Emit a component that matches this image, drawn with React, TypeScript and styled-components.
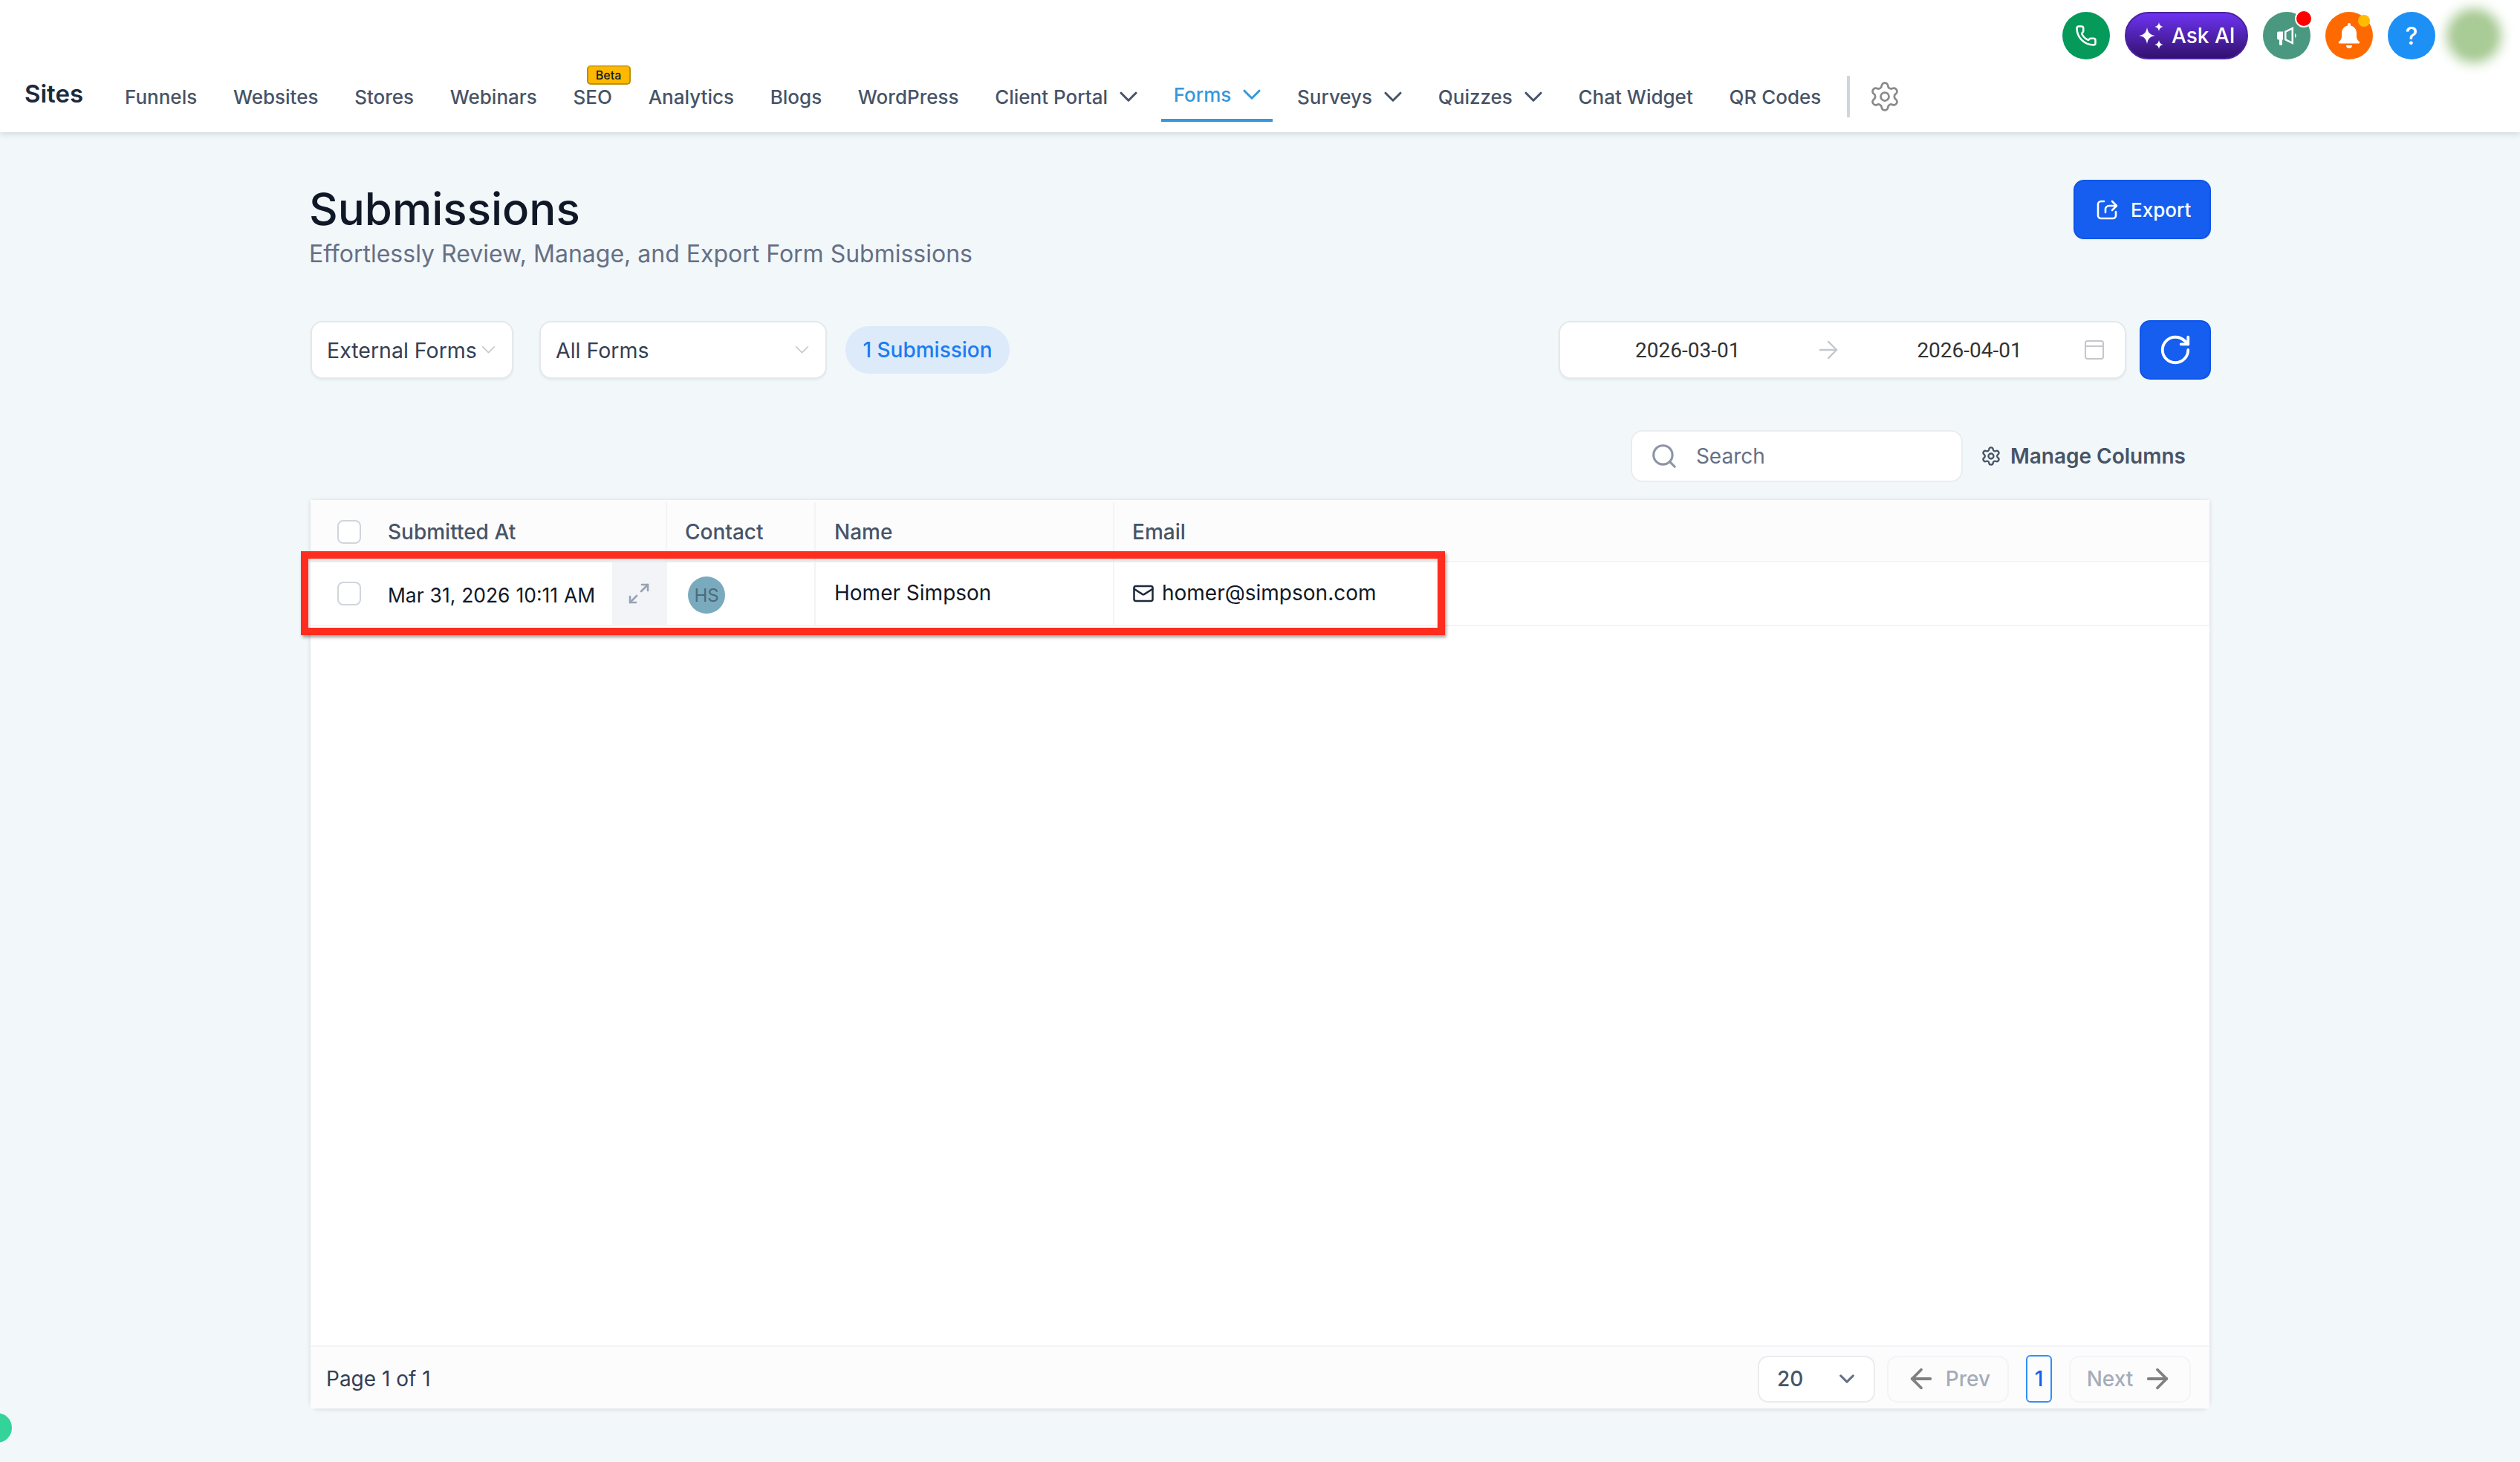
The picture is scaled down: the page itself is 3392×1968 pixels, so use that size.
import React from 'react';
import styled, { createGlobalStyle } from 'styled-components';
import { Phone, Settings, Search, Mail, ArrowLeft, ArrowRight, RotateCw } from 'lucide-react';

const GlobalStyle = createGlobalStyle`
  html, body {
    margin: 0;
    padding: 0;
    background: #f2f7fa;
    font-family: Inter, "Noto Sans", sans-serif;
  }
  * { box-sizing: border-box; }
`;

const NAV_ITEMS = [
  { label: 'Funnels' },
  { label: 'Websites' },
  { label: 'Stores' },
  { label: 'Webinars' },
  { label: 'SEO', beta: true },
  { label: 'Analytics' },
  { label: 'Blogs' },
  { label: 'WordPress' },
  { label: 'Client Portal', caret: true },
  { label: 'Forms', caret: true, active: true },
  { label: 'Surveys', caret: true },
  { label: 'Quizzes', caret: true },
  { label: 'Chat Widget' },
  { label: 'QR Codes' },
];

const Chevron = ({ w = 24, color = 'currentColor', sw = 3 }: { w?: number; color?: string; sw?: number }) => (
  <svg width={w} height={w * 0.6} viewBox="0 0 24 14" fill="none">
    <path d="M2 2l10 10L22 2" stroke={color} strokeWidth={sw * (24 / w)} strokeLinecap="round" strokeLinejoin="round" />
  </svg>
);

const Stars = () => (
  <svg width="34" height="36" viewBox="0 0 34 36" fill="#fff">
    <path d="M12 7c1.500 7 3.500 9.500 11 11-7.500 1.500-9.500 4-11 11-1.500-7-3.500-9.500-11-11 7.500-1.500 9.500-4 11-11z" />
    <path d="M28 0c.7 3.500 2 5 5.500 6-3.500 1-4.800 2.500-5.500 6-.7-3.500-2-5-5.500-6 3.500-1 4.800-2.500 5.500-6z" />
    <path d="M28 24c.7 3.500 2 5 5.500 6-3.500 1-4.800 2.500-5.500 6-.7-3.500-2-5-5.500-6 3.500-1 4.800-2.500 5.500-6z" />
  </svg>
);

const MegaphoneIcon = () => (
  <svg width="27" height="27" viewBox="0 0 27 27" fill="#fff">
    <path d="M0 9.500a2 2 0 0 1 2-2h6v11H7v6a1.500 1.500 0 0 1-1.500 1.500h-1A1.500 1.500 0 0 1 3 24.500v-6H2a2 2 0 0 1-2-2z" />
    <path fillRule="evenodd" d="M10 7L22 1v24L10 19zM12.500 8.500L19.500 5v16l-7-3.500z" />
    <path d="M24 10a3.500 3.500 0 0 1 0 6z" />
  </svg>
);

const BellIcon = () => (
  <svg width="30" height="34" viewBox="0 0 30 34" fill="#fff">
    <path d="M15 0c1.200 0 2 .8 2 2v1.500c5 1 8 5 8 10v5c0 3 2 5 4 7 .7.7.3 2-1 2H2c-1.300 0-1.700-1.300-1-2 2-2 4-4 4-7v-5c0-5 3-9 8-10V2c0-1.200.8-2 2-2z" />
    <path d="M11 30h8a4 4 0 0 1-8 0z" />
  </svg>
);

const ExportIcon = () => (
  <svg width="30" height="30" viewBox="0 0 30 30" fill="none" stroke="#fff" strokeWidth="2.6" strokeLinecap="round" strokeLinejoin="round">
    <path d="M11 4H7a4 4 0 0 0-4 4v15a4 4 0 0 0 4 4h16a4 4 0 0 0 4-4v-5" />
    <path d="M13 19v-4a5 5 0 0 1 5-5h9" />
    <path d="M22 4l6 6-6 6" />
  </svg>
);

const CalendarIcon = () => (
  <svg width="26" height="26" viewBox="0 0 26 26" fill="none" stroke="#c4c7cc" strokeWidth="2">
    <rect x="1" y="1" width="24" height="24" rx="3" />
    <path d="M1 8h24" />
  </svg>
);

const ExpandIcon = () => (
  <svg width="28" height="28" viewBox="0 0 28 28" fill="none" stroke="#98a2b3" strokeWidth="2.600" strokeLinecap="round" strokeLinejoin="round">
    <path d="M17 11l9-9" />
    <path d="M18 2h8v8" />
    <path d="M11 17l-9 9" />
    <path d="M2 18v8h8" />
  </svg>
);

export default function App() {
  return (
    <Page>
      <GlobalStyle />
      <Header>
        <TopBar>
          <RoundButton $bg="#059a5a">
            <Phone size={30} color="#fff" strokeWidth={2} />
          </RoundButton>
          <AskAi>
            <Stars />
            Ask AI
          </AskAi>
          <RoundButton $bg="#4a9880">
            <MegaphoneIcon />
            <Dot $bg="#ff0000" $ring />
          </RoundButton>
          <RoundButton $bg="#ff6a00">
            <BellIcon />
            <Dot $bg="#ffbc00" />
          </RoundButton>
          <RoundButton $bg="#1c90f5">
            <HelpMark>?</HelpMark>
          </RoundButton>
          <BlurAvatar />
        </TopBar>
        <NavBar>
          <Brand>Sites</Brand>
          <NavList>
            {NAV_ITEMS.map(item => (
              <NavItem key={item.label} $active={item.active}>
                {item.label}
                {item.caret && <Chevron />}
                {item.beta && <BetaBadge>Beta</BetaBadge>}
              </NavItem>
            ))}
          </NavList>
          <NavDivider />
          <Settings size={44} color="#8a8a8a" strokeWidth={1.5} />
        </NavBar>
      </Header>

      <Main>
        <TitleRow>
          <div>
            <Title>Submissions</Title>
            <Subtitle>Effortlessly Review, Manage, and Export Form Submissions</Subtitle>
          </div>
          <PrimaryButton>
            <ExportIcon />
            Export
          </PrimaryButton>
        </TitleRow>

        <FilterRow>
          <SelectBox $width={273}>
            External Forms
            <Chevron w={19} color="#c4c7cc" sw={1.6} />
          </SelectBox>
          <SelectBox $width={387} $gapLeft={35}>
            All Forms
            <Chevron w={19} color="#c4c7cc" sw={1.6} />
          </SelectBox>
          <CountPill>1 Submission</CountPill>
          <DateRange>
            <DateText>2026-03-01</DateText>
            <RangeArrow>
              <ArrowRight size={38} color="#c4c7cc" strokeWidth={1.5} />
            </RangeArrow>
            <DateText>2026-04-01</DateText>
            <CalendarSlot>
              <CalendarIcon />
            </CalendarSlot>
          </DateRange>
          <RefreshButton>
            <RotateCw size={46} color="#fff" strokeWidth={2} />
          </RefreshButton>
        </FilterRow>

        <ToolRow>
          <SearchBox>
            <Search size={38} color="#8d95a5" strokeWidth={2} />
            Search
          </SearchBox>
          <ManageColumns>
            <Settings size={28} color="#475467" strokeWidth={2} />
            Manage Columns
          </ManageColumns>
        </ToolRow>

        <TableCard>
          <HeaderRow>
            <FirstCell>
              <Checkbox />
              Submitted At
            </FirstCell>
            <ContactCell>Contact</ContactCell>
            <NameCell>Name</NameCell>
            <EmailCell>Email</EmailCell>
          </HeaderRow>
          <BodyRow>
            <FirstCell>
              <Checkbox />
              <DateValue>Mar 31, 2026 10:11 AM</DateValue>
              <ExpandBox>
                <ExpandIcon />
              </ExpandBox>
            </FirstCell>
            <ContactCell>
              <Avatar>HS</Avatar>
            </ContactCell>
            <NameCell>
              <RaisedText>Homer Simpson</RaisedText>
            </NameCell>
            <EmailCell>
              <Mail size={30} color="#1d2939" strokeWidth={2} />
              <RaisedText>homer@simpson.com</RaisedText>
            </EmailCell>
          </BodyRow>
          <TableSpace />
          <TableFooter>
            <PageInfo>Page 1 of 1</PageInfo>
            <Pager>
              <PageSize>
                20
                <Chevron w={20} color="#667085" sw={3} />
              </PageSize>
              <PagerButton>
                <ArrowLeft size={42} color="#808080" strokeWidth={2.2} />
                Prev
              </PagerButton>
              <PageNumber>1</PageNumber>
              <PagerButton>
                Next
                <ArrowRight size={42} color="#808080" strokeWidth={2.2} />
              </PagerButton>
            </Pager>
          </TableFooter>
          <Highlight />
        </TableCard>
      </Main>
      <ChatDot />
    </Page>
  );
}

const Page = styled.div`
  position: relative;
  width: 3392px;
  height: 1968px;
  overflow: hidden;
  background: #f2f7fa;
`;

const Header = styled.header`
  height: 178px;
  background: #fff;
  box-shadow: 0 2px 8px rgba(16, 24, 40, 0.16);
`;

const TopBar = styled.div`
  display: flex;
  align-items: center;
  justify-content: flex-end;
  gap: 20px;
  height: 96px;
  padding-right: 33px;
`;

const RoundButton = styled.div<{ $bg: string }>`
  position: relative;
  display: flex;
  align-items: center;
  justify-content: center;
  width: 64px;
  height: 64px;
  border-radius: 50%;
  background: ${p => p.$bg};
`;

const Dot = styled.span<{ $bg: string; $ring?: boolean }>`
  position: absolute;
  top: ${p => (p.$ring ? '-3px' : '4px')};
  right: ${p => (p.$ring ? '-3px' : '4px')};
  box-sizing: content-box;
  width: ${p => (p.$ring ? '20px' : '16px')};
  height: ${p => (p.$ring ? '20px' : '16px')};
  border-radius: 50%;
  background: ${p => p.$bg};
  border: ${p => (p.$ring ? '2px solid #fff' : 'none')};
`;

const HelpMark = styled.span`
  color: #fff;
  font-size: 32px;
  font-weight: 500;
`;

const AskAi = styled.div`
  display: flex;
  align-items: center;
  gap: 11px;
  width: 166px;
  height: 64px;
  padding-left: 16px;
  border-radius: 32px;
  border: 2px solid #4a22a0;
  background: linear-gradient(180deg, #6d33f0 0%, #32116e 100%);
  color: #fff;
  font-size: 28px;
  font-weight: 500;
`;

const BlurAvatar = styled.div`
  width: 58px;
  height: 58px;
  margin-left: 3px;
  border-radius: 50%;
  background: #a9cb96;
  box-shadow: 0 0 14px 8px #a9cb96;
  filter: blur(5px);
`;

const NavBar = styled.nav`
  display: flex;
  align-items: center;
  height: 68px;
  padding-left: 33px;
`;

const Brand = styled.div`
  width: 135px;
  margin-bottom: 8px;
  color: #1d2939;
  font-size: 33px;
  font-weight: 600;
`;

const NavList = styled.div`
  display: flex;
  align-items: center;
  gap: 48.7px;
`;

const NavItem = styled.div<{ $active?: boolean }>`
  position: relative;
  display: flex;
  align-items: center;
  gap: 16px;
  height: 34px;
  margin-bottom: ${p => (p.$active ? '6px' : '0')};
  color: ${p => (p.$active ? '#3498db' : '#475467')};
  font-size: 26px;
  font-weight: 500;
  white-space: nowrap;

  ${p =>
    p.$active &&
    `
    &::after {
      content: '';
      position: absolute;
      left: -17px;
      right: -16px;
      top: 50px;
      height: 4px;
      background: #3498db;
    }
  `}
`;

const BetaBadge = styled.span`
  position: absolute;
  left: 18px;
  bottom: calc(100% - 1px);
  width: 59px;
  height: 26px;
  border-radius: 5px;
  border: 2px solid #b8900c;
  border-top-color: #dda50a;
  background: #ffb800;
  color: #101828;
  font-size: 16px;
  font-weight: 500;
  line-height: 22px;
  text-align: center;
`;

const NavDivider = styled.div`
  width: 4px;
  height: 56px;
  margin: 0 25px 0 35px;
  background: #d0d5dd;
`;

const Main = styled.main`
  width: 2558px;
  margin-left: 418px;
`;

const TitleRow = styled.div`
  display: flex;
  align-items: flex-start;
  justify-content: space-between;
  height: 253px;
  padding-top: 64px;
`;

const Title = styled.h1`
  margin: 3px 0 0 -2px;
  color: #101828;
  font-size: 60px;
  font-weight: 500;
  line-height: 72px;
`;

const Subtitle = styled.p`
  margin: 5px 0 0 -2px;
  color: #667085;
  font-size: 32px;
  font-weight: 400;
  line-height: 40px;
`;

const PrimaryButton = styled.div`
  display: flex;
  align-items: center;
  gap: 17px;
  width: 185px;
  height: 80px;
  padding-left: 28px;
  border-radius: 14px;
  border: 2px solid #0e55e8;
  background: #155eef;
  color: #fff;
  font-size: 26px;
  font-weight: 500;
`;

const FilterRow = styled.div`
  display: flex;
  align-items: center;
  height: 80px;
`;

const SelectBox = styled.div<{ $width: number; $gapLeft?: number }>`
  display: flex;
  align-items: center;
  justify-content: space-between;
  width: ${p => p.$width}px;
  height: 78px;
  margin-left: ${p => p.$gapLeft || 0}px;
  padding: 0 22px 0 20px;
  border-radius: 16px;
  border: 2px solid #e4e7ec;
  background: #fff;
  box-shadow: 0 2px 3px rgba(16, 24, 40, 0.05);
  color: #344054;
  font-size: 28.5px;
  white-space: nowrap;
`;

const CountPill = styled.div`
  display: flex;
  align-items: center;
  justify-content: center;
  width: 221px;
  height: 64px;
  margin-left: 25px;
  border-radius: 32px;
  background: #dceafa;
  color: #1c7cf0;
  font-size: 28px;
  font-weight: 500;
`;

const DateRange = styled.div`
  display: flex;
  align-items: center;
  width: 764px;
  height: 78px;
  margin-left: auto;
  padding-left: 101px;
  border-radius: 16px;
  border: 2px solid #e4e7ec;
  background: #fff;
  box-shadow: 0 2px 3px rgba(16, 24, 40, 0.05);
`;

const DateText = styled.span`
  color: #333333;
  font-family: Roboto, sans-serif;
  font-size: 28px;
`;

const RangeArrow = styled.span`
  display: flex;
  margin: 0 100px;
`;

const CalendarSlot = styled.span`
  display: flex;
  margin-left: 84px;
`;

const RefreshButton = styled.div`
  display: flex;
  align-items: center;
  justify-content: center;
  width: 96px;
  height: 80px;
  margin-left: 18px;
  border-radius: 14px;
  border: 2px solid #0e55e8;
  background: #155eef;
`;

const ToolRow = styled.div`
  display: flex;
  align-items: center;
  justify-content: flex-end;
  gap: 24px;
  height: 70px;
  margin-top: 68px;
  padding-right: 34px;
`;

const SearchBox = styled.div`
  display: flex;
  align-items: center;
  gap: 24px;
  width: 447px;
  height: 70px;
  padding-left: 24px;
  border-radius: 16px;
  border: 2px solid #eaecf0;
  background: #fff;
  color: #667085;
  font-size: 28px;
`;

const ManageColumns = styled.div`
  display: flex;
  align-items: center;
  gap: 12px;
  color: #475467;
  font-size: 28px;
  font-weight: 600;
`;

const TableCard = styled.div`
  position: relative;
  display: flex;
  flex-direction: column;
  width: 2556px;
  height: 1223px;
  margin-top: 24px;
  border-radius: 0 0 12px 12px;
  background: #fff;
  box-shadow: 0 1px 6px rgba(16, 24, 40, 0.14);
`;

const HeaderRow = styled.div`
  display: flex;
  flex: none;
  height: 84px;
  padding-top: 3px;
  background: #fcfcfd;
  border-bottom: 2px solid #f2f4f7;
  color: #475467;
  font-size: 28px;
  font-weight: 500;
`;

const BodyRow = styled.div`
  display: flex;
  flex: none;
  height: 86px;
  background: #fff;
  border-bottom: 2px solid #f2f4f7;
  color: #101828;
  font-size: 28px;
`;

const Cell = styled.div`
  display: flex;
  align-items: center;
  flex: none;
  height: 100%;
  border-right: 2px solid #f2f4f7;
  white-space: nowrap;
`;

const FirstCell = styled(Cell)`
  position: relative;
  gap: 36px;
  width: 480px;
  padding-left: 36px;
`;

const ContactCell = styled(Cell)`
  width: 200px;
  padding-left: 24px;
`;

const NameCell = styled(Cell)`
  width: 402px;
  padding-left: 25px;
`;

const EmailCell = styled(Cell)`
  flex: 1;
  gap: 10px;
  padding-left: 24px;
  border-right: none;
`;

const RaisedText = styled.span`
  margin-bottom: 2px;
`;

const Checkbox = styled.span`
  width: 32px;
  height: 32px;
  border-radius: 8px;
  border: 2px solid #d0d5dd;
  background: #fff;
`;

const DateValue = styled.span`
  margin-top: 4px;
  font-size: 26.4px;
  word-spacing: 0.6px;
`;

const ExpandBox = styled.div`
  position: absolute;
  top: 0;
  right: 0;
  bottom: 0;
  display: flex;
  align-items: center;
  justify-content: center;
  width: 72px;
  background: #f2f4f7;
`;

const Avatar = styled.div`
  display: flex;
  align-items: center;
  justify-content: center;
  width: 50px;
  height: 50px;
  margin: 4px 0 0 4px;
  border-radius: 50%;
  background: #7aaabd;
  color: #4b6a7c;
  font-size: 24px;
`;

const TableSpace = styled.div`
  flex: 1;
`;

const TableFooter = styled.div`
  display: flex;
  flex: none;
  align-items: center;
  justify-content: space-between;
  height: 85px;
  padding: 3px 25px 0 21px;
  background: #fcfcfd;
  border-top: 2px solid #f2f4f7;
`;

const PageInfo = styled.span`
  color: #344054;
  font-size: 28px;
`;

const Pager = styled.div`
  display: flex;
  align-items: center;
`;

const PageSize = styled.div`
  display: flex;
  align-items: center;
  justify-content: space-between;
  width: 158px;
  height: 63px;
  padding: 0 26px 0 24px;
  border-radius: 14px;
  border: 2px solid #eaecf0;
  background: #fff;
  color: #475467;
  font-size: 28px;
  font-weight: 500;
`;

const PagerButton = styled.div`
  display: flex;
  align-items: center;
  justify-content: center;
  gap: 12px;
  width: 164px;
  height: 63px;
  margin-left: 16px;
  border-radius: 14px;
  border: 2px solid #f2f4f7;
  background: #fcfcfd;
  color: #a5acb8;
  font-size: 28px;
  font-weight: 500;
`;

const PageNumber = styled.div`
  display: flex;
  align-items: center;
  justify-content: center;
  width: 35px;
  height: 64px;
  margin: 0 7px 0 23px;
  border-radius: 6px;
  border: 2px solid #2e90fa;
  color: #155eef;
  font-size: 28px;
  font-weight: 500;
`;

const Highlight = styled.div`
  position: absolute;
  left: -13px;
  top: 69px;
  width: 1540px;
  height: 113px;
  border: 10px solid #ff2d1e;
  box-shadow: 2px 3px 4px rgba(0, 0, 0, 0.35), inset 0 3px 3px rgba(0, 0, 0, 0.12);
  pointer-events: none;
`;

const ChatDot = styled.div`
  position: absolute;
  left: -24px;
  top: 1902px;
  width: 40px;
  height: 40px;
  border-radius: 50%;
  background: #34d399;
`;
